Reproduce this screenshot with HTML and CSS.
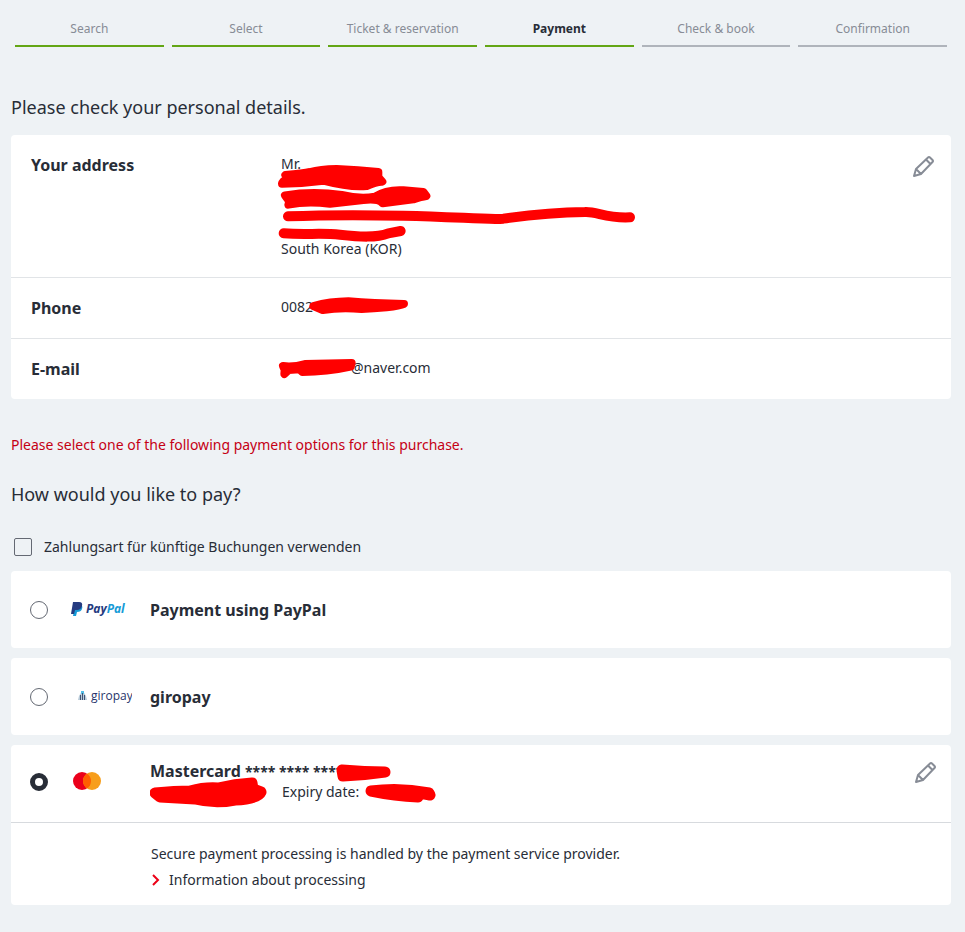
FILE: index.html
```html
<!DOCTYPE html>
<html lang="en">
<head>
  <meta charset="UTF-8" />
  <meta name="viewport" content="width=device-width, initial-scale=1" />
  <title>Payment</title>
  <link rel="stylesheet" href="styles.css">
</head>
<body>
  <!-- Booking steps -->
  <nav>
    <ol class="steps">
      <li class="step done">Search</li>
      <li class="step done">Select</li>
      <li class="step done">Ticket &amp; reservation</li>
      <li class="step done current" aria-current="step">Payment</li>
      <li class="step">Check &amp; book</li>
      <li class="step">Confirmation</li>
    </ol>
  </nav>

  <main>
    <!-- Personal details -->
    <h1 class="title">Please check your personal details.</h1>
    <dl class="card details">
      <div class="row">
        <dt>Your address</dt>
        <dd class="address">
          <span>Mr.</span>
          <span class="hidden-lines"></span>
          <span>South Korea (KOR)</span>
          <svg class="marker marker-address" viewBox="0 0 1110 345" aria-hidden="true">
            <path d="M46 105Q100 100 120 96Q150 88 200 87Q265 90 325 96L325 112L337 125Q322 124 290 138Q240 143 160 122Q100 130 36 131Q38 122 54 115Z" />
            <path d="M45 166Q130 152 215 165Q270 178 315 170Q350 148 400 151L460 156L469 168Q455 170 430 178L338 190Q325 175 280 180L180 191Q110 182 55 194Q60 184 52 176Z" />
            <path class="line" d="M54 229Q200 223 400 227C560 230 650 240 700 236C800 222 860 217 945 216C980 214 1010 236 1080 232" />
            <path class="line" d="M41 280C110 285 150 278 210 284C270 291 320 294 355 280L392 273" />
          </svg>
        </dd>
        <dd class="action">
          <button class="edit" type="button" aria-label="Edit address">
            <svg viewBox="0 0 24 24"><path d="M3 21l2-7L17 2.500q1-1 2 0l2.500 2.500q1 1 0 2L10 19zM5 14l5 5M15 4.500l4.500 4.500" /></svg>
          </button>
        </dd>
      </div>
      <div class="row">
        <dt>Phone</dt>
        <dd>
          0082
          <svg class="marker marker-phone" viewBox="0 0 450 120" aria-hidden="true">
            <path d="M130 78Q180 65 235 64Q310 70 402 72Q390 78 350 82Q310 86 275 87Q210 82 158 90Z" />
          </svg>
        </dd>
      </div>
      <div class="row">
        <dt>E-mail</dt>
        <dd class="email">
          @naver.com
          <svg class="marker marker-email" viewBox="0 180 300 135" aria-hidden="true">
            <path d="M39 258Q70 262 105 252L245 249L242 260Q170 276 97 276L88 268L56 270L43 282L44 270Z" />
          </svg>
        </dd>
      </div>
    </dl>

    <!-- Payment options -->
    <p class="error" role="alert">Please select one of the following payment options for this purchase.</p>
    <form>
      <h2 class="title">How would you like to pay?</h2>
      <label class="remember" lang="de">
        <input class="checkbox" type="checkbox">
        Zahlungsart für künftige Buchungen verwenden
      </label>

      <div class="card option">
        <input class="radio" type="radio" name="payment" id="paypal">
        <svg class="logo" viewBox="0 0 62 20" aria-hidden="true">
          <path fill="#179bd7" d="M5 5h6q2 1 1 4-1 3-5 3l-1 4H3z" />
          <path fill="#253b80" d="M3 2h6q4 0 3 4-1 4-5 4H5l-1 4H1z" />
          <text x="16" y="13" class="paypal-text"><tspan fill="#253b80">Pay</tspan><tspan fill="#179bd7">Pal</tspan></text>
        </svg>
        <label class="option-name" for="paypal">Payment using PayPal</label>
      </div>

      <div class="card option">
        <input class="radio" type="radio" name="payment" id="giropay">
        <svg class="logo" viewBox="0 0 62 20" aria-hidden="true">
          <path fill="#b9cbd9" d="M8 13l1-4 3-5h1l3 5 1 4z" />
          <path fill="#55bfe8" d="M11 4h3v3h-3z" />
          <path stroke="#3f5475" d="M10.500 8v5M12.500 6v7M14.500 8v5" />
          <text x="21" y="13" class="giropay-text">giropay</text>
        </svg>
        <label class="option-name" for="giropay">giropay</label>
      </div>

      <div class="card">
        <div class="option selected">
          <input class="radio" type="radio" name="payment" id="mastercard" checked>
          <svg class="logo" viewBox="0 0 62 20" aria-hidden="true">
            <circle cx="12" cy="9" r="9" fill="#eb001b" />
            <circle cx="22" cy="9" r="9" fill="#f79e1b" />
            <path fill="#ff5f00" d="M17 1.500a9 9 0 0 1 0 15 9 9 0 0 1 0-15z" />
          </svg>
          <div class="card-info">
            <label class="option-name" for="mastercard">Mastercard <span class="digits">**** **** ****</span></label>
            <p class="expiry">Expiry date:</p>
            <svg class="marker marker-card" viewBox="150 760 290 50" aria-hidden="true">
              <path d="M155 792Q175 790 190 790Q205 786 218 787Q235 783 252 782L253 788L261 791Q258 798 235 799Q215 803 195 798Q178 797 160 796Z" />
              <path d="M342 769Q365 771 385 771Q365 774 343 775Z" />
              <path d="M371 790Q400 786 429 792L430 794L420 792L418 796Q395 795 371 790Z" />
            </svg>
          </div>
          <button class="edit" type="button" aria-label="Edit card">
            <svg viewBox="0 0 24 24"><path d="M3 21l2-7L17 2.500q1-1 2 0l2.500 2.500q1 1 0 2L10 19zM5 14l5 5M15 4.500l4.500 4.500" /></svg>
          </button>
        </div>
        <div class="processing">
          <p>Secure payment processing is handled by the payment service provider.</p>
          <a href="#">
            <svg class="chevron" viewBox="0 0 10 12" aria-hidden="true"><path d="M2 1l5 5-5 5" /></svg>
            Information about processing
          </a>
        </div>
      </div>
    </form>
  </main>
</body>
</html>
```

FILE: styles.css
```css
* {
  box-sizing: border-box;
}

body {
  margin: 0;
  padding: 0 14px 24px 11px;
  background: #eef2f5;
  color: #282d37;
  font: 14px/20px "Noto Sans", sans-serif;
}

p,
dl,
dd,
ol {
  margin: 0;
  padding: 0;
}

/* Steps */
.steps {
  display: grid;
  grid-template-columns: repeat(6, 1fr);
  gap: 8px;
  padding: 19px 4px 0;
  list-style: none;
}

.step {
  height: 28px;
  border-bottom: 2px solid #afb4bb;
  color: #878c96;
  font-size: 12px;
  text-align: center;
}

.done {
  border-color: #63a615;
}

.current {
  color: #282d37;
  font-weight: bold;
}

.title {
  margin: 0;
  font-size: 18px;
  line-height: 24px;
  font-weight: normal;
}

h1.title {
  padding: 48px 0 16px;
}

.card {
  margin-bottom: 10px;
  background: #fff;
  border-radius: 4px;
}

/* Personal details */
.row {
  display: grid;
  grid-template-columns: 250px 1fr auto;
  padding: 20px 16px 20px 20px;
  border-bottom: 1px solid #e1e4e7;
}

.row:last-child {
  border-bottom: 0;
}

.row dt {
  font-size: 16px;
  font-weight: bold;
}

.row dd {
  position: relative;
  line-height: 18px;
}

.row .address {
  display: flex;
  flex-direction: column;
  line-height: 17px;
}

.hidden-lines {
  height: 68px;
}

.row .email {
  padding-left: 70px;
}

/* Red pen strokes over the private data */
.marker {
  position: absolute;
  fill: #f00;
  stroke: #f00;
  stroke-width: 24;
  stroke-linecap: round;
  stroke-linejoin: round;
}

.marker .line {
  fill: none;
  stroke-width: 30;
}

.marker-address {
  left: -11px;
  top: -15px;
  width: 370px;
  height: 115px;
}

.marker-phone {
  left: -11px;
  top: -18px;
  width: 150px;
  height: 40px;
}

.marker-email {
  left: -11px;
  top: -19px;
  width: 100px;
  height: 45px;
}

.marker-card {
  left: 0;
  top: 0;
  width: 290px;
  height: 50px;
  stroke-width: 11;
}

.edit {
  width: 24px;
  height: 24px;
  padding: 0;
  border: 0;
  background: none;
  cursor: pointer;
}

.edit svg {
  display: block;
  fill: none;
  stroke: #878c96;
  stroke-width: 2;
  stroke-linejoin: round;
}

/* Payment */
.error {
  padding: 26px 0 27px;
  color: #c50014;
}

.remember {
  display: flex;
  align-items: center;
  gap: 12px;
  padding: 31px 3px 14px;
}

.checkbox,
.radio {
  appearance: none;
  flex: none;
  width: 18px;
  height: 18px;
  margin: 0;
  border: 1px solid #646973;
  border-radius: 2px;
  background: #fff;
}

.checkbox {
  background: none;
}

.radio {
  border-radius: 50%;
}

.radio:checked {
  border: 5px solid #282d37;
}

.option {
  display: grid;
  grid-template-columns: 40px 80px 1fr auto;
  align-items: center;
  min-height: 77px;
  padding: 0 14px 0 19px;
}

.logo {
  width: 62px;
  height: 20px;
}

.paypal-text {
  font: italic bold 12px "Noto Sans", sans-serif;
}

.giropay-text {
  fill: #28356b;
  font: 12px "Open Sans", sans-serif;
}

.option-name {
  font-size: 16px;
  font-weight: bold;
}

.digits {
  font-size: 14px;
}

.selected {
  min-height: 78px;
  padding-bottom: 4px;
  border-bottom: 1px solid #d7dade;
}

.selected .edit {
  align-self: start;
  margin-top: 16px;
}

.card-info {
  position: relative;
}

.expiry {
  padding-left: 132px;
}

.processing {
  padding: 21px 20px 15px 140px;
}

.processing a {
  display: flex;
  align-items: center;
  gap: 8px;
  margin-top: 6px;
  color: inherit;
  text-decoration: none;
}

.chevron {
  width: 10px;
  height: 12px;
  fill: none;
  stroke: #ec0016;
  stroke-width: 2;
}
```
